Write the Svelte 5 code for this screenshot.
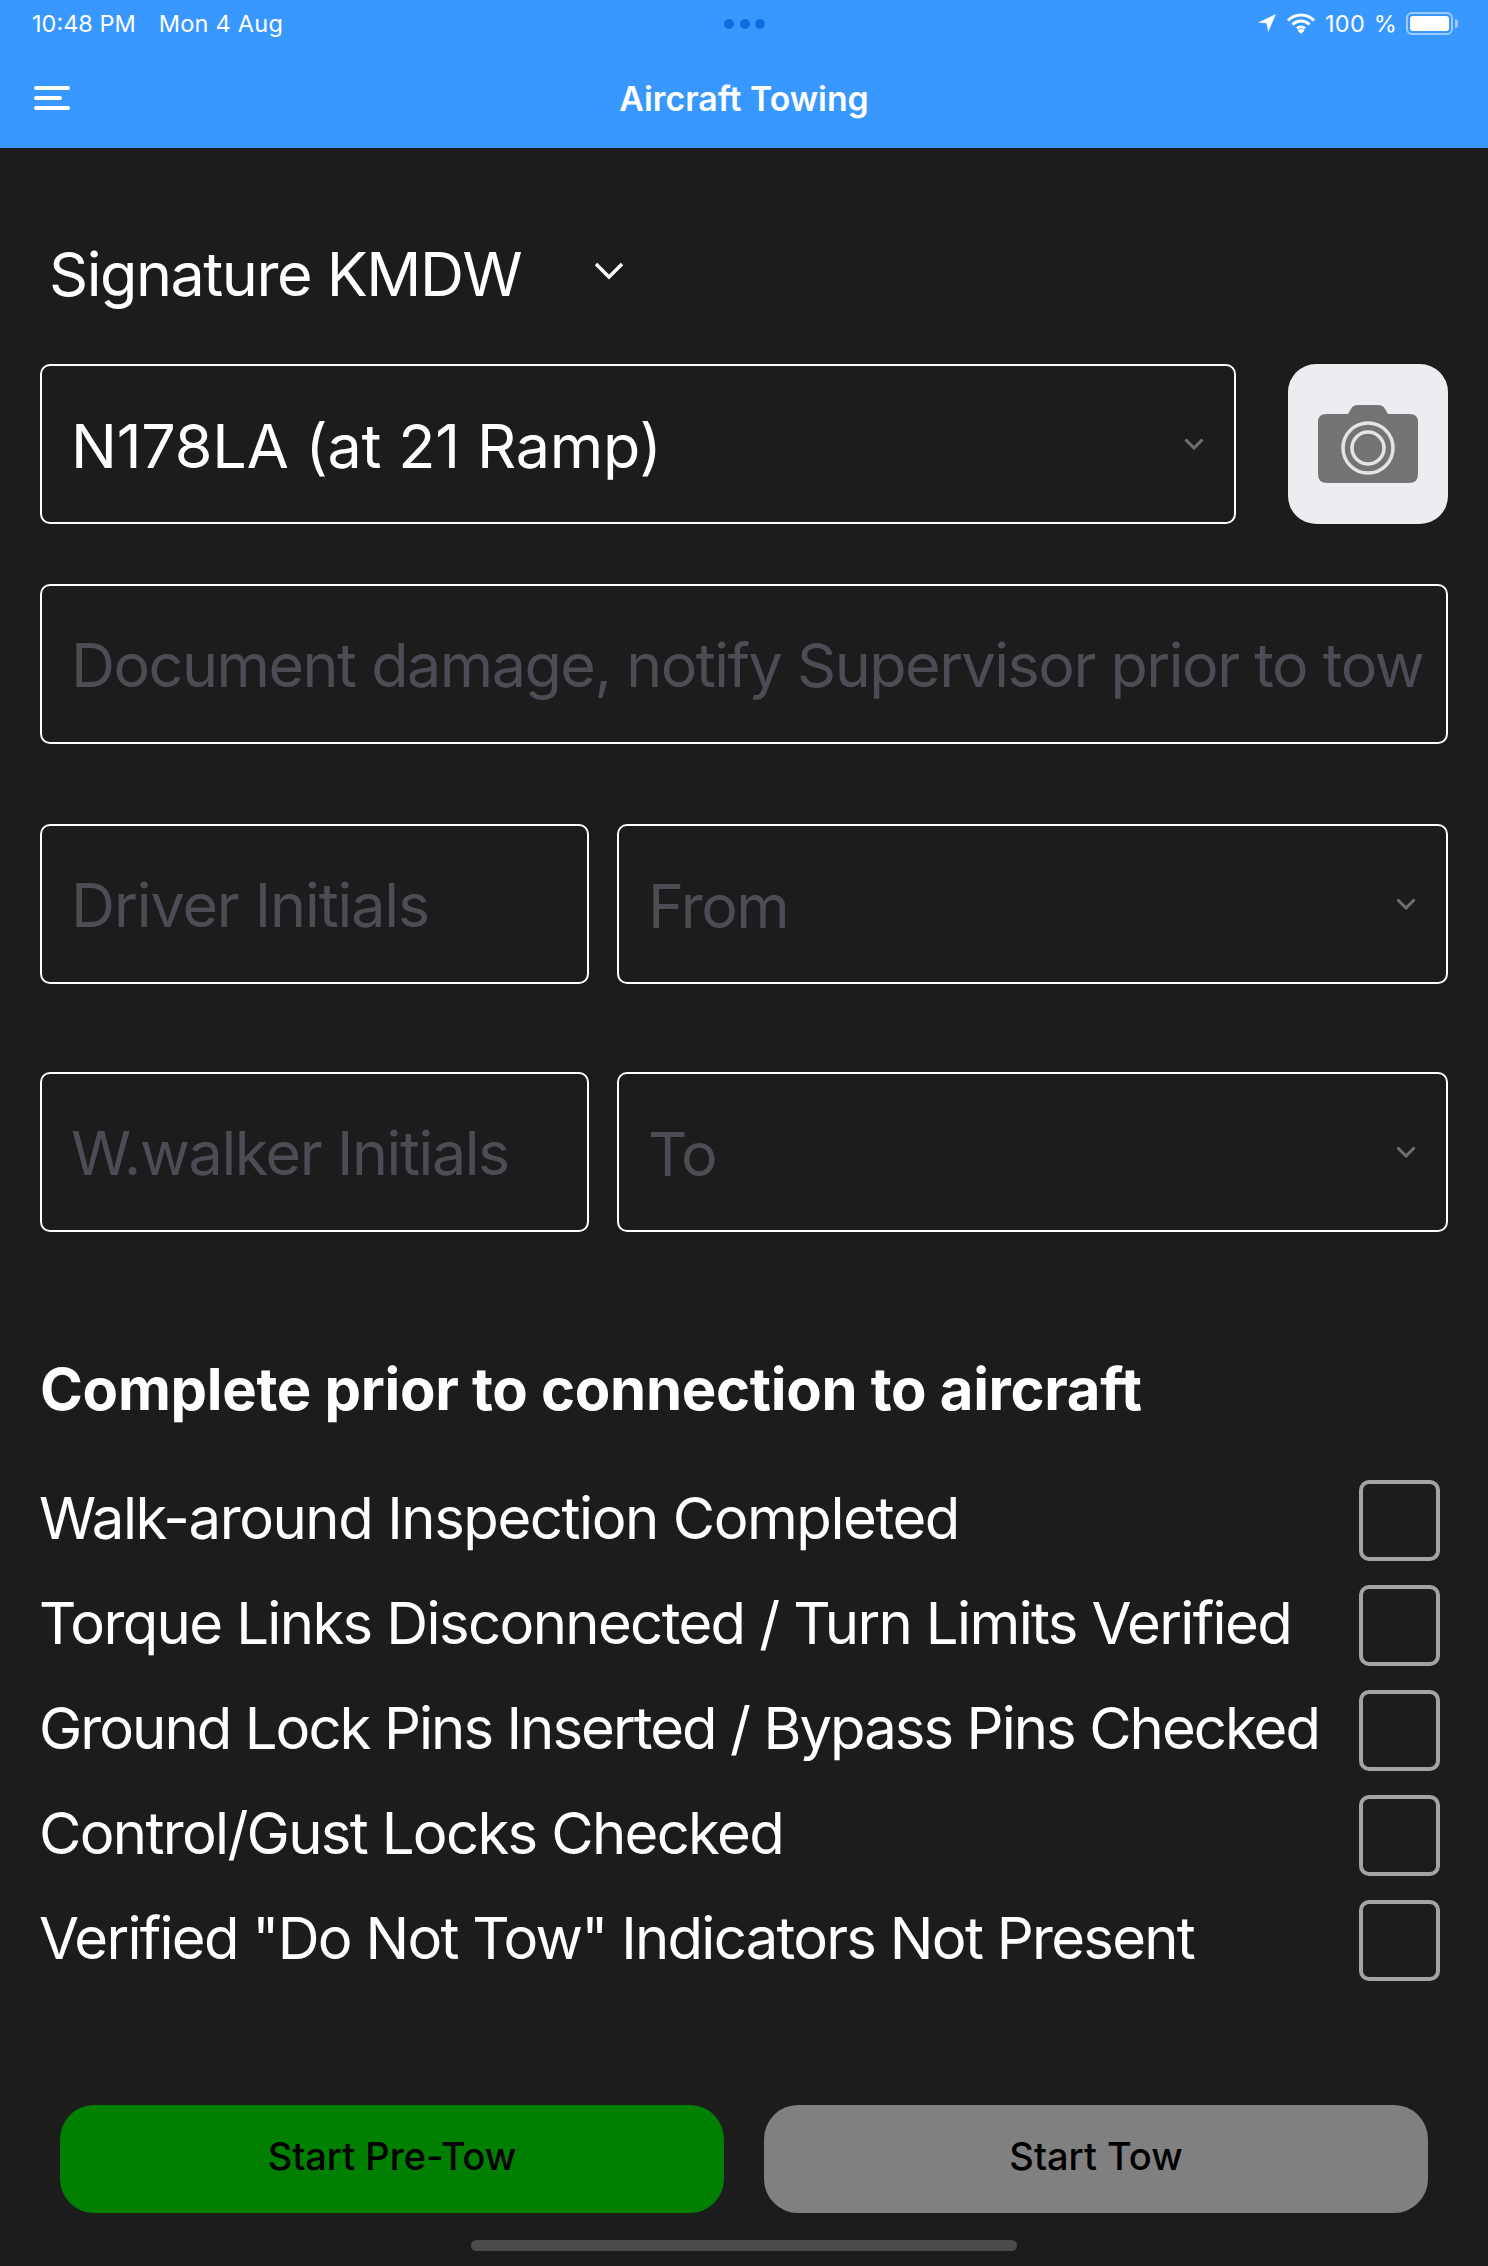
<script>
  const checks = [
    'Walk-around Inspection Completed',
    'Torque Links Disconnected / Turn Limits Verified',
    'Ground Lock Pins Inserted / Bypass Pins Checked',
    'Control/Gust Locks Checked',
    'Verified "Do Not Tow" Indicators Not Present'
  ];
</script>

{#snippet chevron()}
  <svg class="chev" width="20" height="12" viewBox="0 0 20 12"><path d="M1.5 1.5 10 10l8.5-8.5" fill="none" stroke="#6f6f6f" stroke-width="3"/></svg>
{/snippet}

<div class="page">
  <header class="header">
    <div class="status">
      <div class="status-left"><span>10:48 PM</span><span>Mon 4 Aug</span></div>
      <div class="dots"><i></i><i></i><i></i></div>
      <div class="status-right">
        <svg width="20" height="20" viewBox="0 0 20 20"><path d="M19 1 1 9.6l8.6.6 1.6 8.8z" fill="#fff"/></svg>
        <svg width="30" height="22" viewBox="0 0 30 22"><path d="M2 8.5a18 18 0 0 1 26 0M6.5 12.5a12 12 0 0 1 17 0M11 16.5a6 6 0 0 1 8 0" fill="none" stroke="#fff" stroke-width="3"/><path d="m15 22-3.5-3.6a5 5 0 0 1 7 0z" fill="#fff"/></svg>
        <span class="pct">100 %</span>
        <div class="battery"><div class="fill"></div></div>
        <div class="nub"></div>
      </div>
    </div>
    <div class="nav">
      <div class="burger"><i></i><i class="short"></i><i></i></div>
      <div class="title">Aircraft Towing</div>
    </div>
  </header>

  <main class="content">
    <div class="location"><span>Signature KMDW</span>
      <svg class="loc-chev" width="32" height="20" viewBox="0 0 32 20"><path d="M3 3l13 13L29 3" fill="none" stroke="#fff" stroke-width="3.4"/></svg>
    </div>

    <div class="row first">
      <div class="box grow"><span class="value">N178LA (at 21 Ramp)</span>{@render chevron()}</div>
      <button class="camera" aria-label="Camera">
        <svg width="100" height="80" viewBox="0 0 100 80">
          <path d="M8 10h22l3-5q2-4 7-4h20q5 0 7 4l3 5h22q8 0 8 8v52q0 9-9 9H9q-9 0-9-9V18q0-8 8-8z" fill="#747474"/>
          <circle cx="50" cy="44" r="25" fill="none" stroke="#e4e4e6" stroke-width="3.5"/>
          <circle cx="50" cy="44" r="16" fill="none" stroke="#e4e4e6" stroke-width="3.5"/>
        </svg>
      </button>
    </div>

    <div class="box doc"><span class="ph">Document damage, notify Supervisor prior to tow</span></div>

    <div class="row pair">
      <div class="box small"><span class="ph">Driver Initials</span></div>
      <div class="box grow"><span class="ph sel">From</span>{@render chevron()}</div>
    </div>
    <div class="row pair second">
      <div class="box small"><span class="ph">W.walker Initials</span></div>
      <div class="box grow"><span class="ph sel">To</span>{@render chevron()}</div>
    </div>

    <h2>Complete prior to connection to aircraft</h2>

    <div class="checks">
      {#each checks as c}
        <div class="check"><span>{c}</span><div class="cb"></div></div>
      {/each}
    </div>

    <div class="actions">
      <button class="act green">Start Pre-Tow</button>
      <button class="act gray">Start Tow</button>
    </div>
    <div class="home"></div>
  </main>
</div>

<style>
  :global(body) { margin: 0; background: #1c1c1c; }
  .page { width: 1488px; height: 2266px; background: #1c1c1c; color: #fff; font-family: Inter, "Liberation Sans", sans-serif; overflow: hidden; }
  .header { height: 148px; background: #3898ff; box-sizing: border-box; padding: 0 32px; }
  .status { height: 46px; padding-bottom: 2px; display: flex; align-items: center; justify-content: space-between; font-size: 23.5px; position: relative; }
  .status-left { display: flex; gap: 23px; }
  .status-left span:last-child { letter-spacing: 0.25px; }
  .dots { position: absolute; left: 692px; top: 19px; display: flex; gap: 5.5px; }
  .dots i { width: 10px; height: 10px; border-radius: 50%; background: #0a6fe0; }
  .status-right { display: flex; align-items: center; gap: 9px; margin-right: -2px; }
  .pct { word-spacing: 2px; letter-spacing: 0.2px; }
  .battery { width: 47px; height: 23px; box-sizing: border-box; border: 2px solid #9ccbff; border-radius: 6px; padding: 2px; }
  .fill { height: 100%; background: #fff; border-radius: 3px; }
  .nub { width: 3px; height: 9px; background: #9ccbff; border-radius: 0 3px 3px 0; margin-left: -7px; }
  .nav { position: relative; height: 100px; display: flex; align-items: flex-start; }
  .burger { display: flex; flex-direction: column; gap: 6px; margin-top: 38px; margin-left: 2px; width: 36px; }
  .burger i { display: block; height: 4px; background: #fff; border-radius: 2px; }
  .burger i.short { width: 28px; }
  .title { position: absolute; left: 0; right: 0; top: 31px; text-align: center; font-size: 33.8px; font-weight: 600; line-height: 40px; }

  .content { padding: 0 40px; }
  .location { display: flex; align-items: center; height: 64px; margin-top: 94px; margin-bottom: -2px; padding-left: 9px; font-size: 61px; font-weight: 400; letter-spacing: -1.45px; gap: 72px; }
  .loc-chev { margin-bottom: 6px; }
  .row { display: flex; }
  .first { margin-top: 60px; gap: 52px; }
  .box { height: 160px; box-sizing: border-box; border: 2px solid #fff; border-radius: 10px; padding: 0 29px; display: flex; align-items: center; justify-content: space-between; font-size: 61px; font-weight: 400; }
  .chev { margin-right: 1px; }
  .value { letter-spacing: -0.2px; padding-top: 4px; white-space: nowrap; }
  .grow { flex: 1; min-width: 0; }
  .camera { width: 160px; height: 160px; border: 0; border-radius: 28px; background: #ecedf1; padding: 0; display: flex; align-items: center; justify-content: center; }
  .doc { margin-top: 60px; }
  .ph { color: #4c4c54; white-space: nowrap; letter-spacing: -1.5px; padding-top: 1px; }
  .ph.sel { padding-top: 3px; }
  .small .ph { letter-spacing: -1.1px; }
  .pair { gap: 28px; margin-top: 80px; }
  .pair.second { margin-top: 88px; }
  .pair.second .small .ph { letter-spacing: -1.4px; }
  .small { width: 549px; flex: none; }
  h2 { margin: 123px 0 0; font-size: 58px; line-height: 68px; font-weight: 700; letter-spacing: -0.3px; }
  .checks { margin-top: 45px; }
  .check { height: 105px; display: flex; align-items: center; justify-content: space-between; font-size: 58px; font-weight: 400; white-space: nowrap; padding-right: 8px; }
  .check span { padding-bottom: 5px; margin-left: -1px; }
  .check:nth-child(1) { letter-spacing: -1.43px; }
  .check:nth-child(2) { letter-spacing: -1.62px; }
  .check:nth-child(3) { letter-spacing: -1.94px; }
  .check:nth-child(4) { letter-spacing: -1.67px; }
  .check:nth-child(5) { letter-spacing: -1.72px; }
  .cb { width: 81px; height: 81px; box-sizing: border-box; border: 4px solid #a3a3a3; border-radius: 10px; flex: none; }
  .actions { display: flex; gap: 40px; margin: 112px 20px 0; }
  .act { flex: 1; height: 108px; border: 0; border-radius: 34px; color: #000; font-family: inherit; font-size: 38px; font-weight: 500; padding: 0 0 7px; }
  .green { background: #007f00; }
  .gray { background: #808080; }
  .home { width: 546px; height: 11px; border-radius: 6px; background: #4b4b4b; margin: 27px auto 0; }
</style>
